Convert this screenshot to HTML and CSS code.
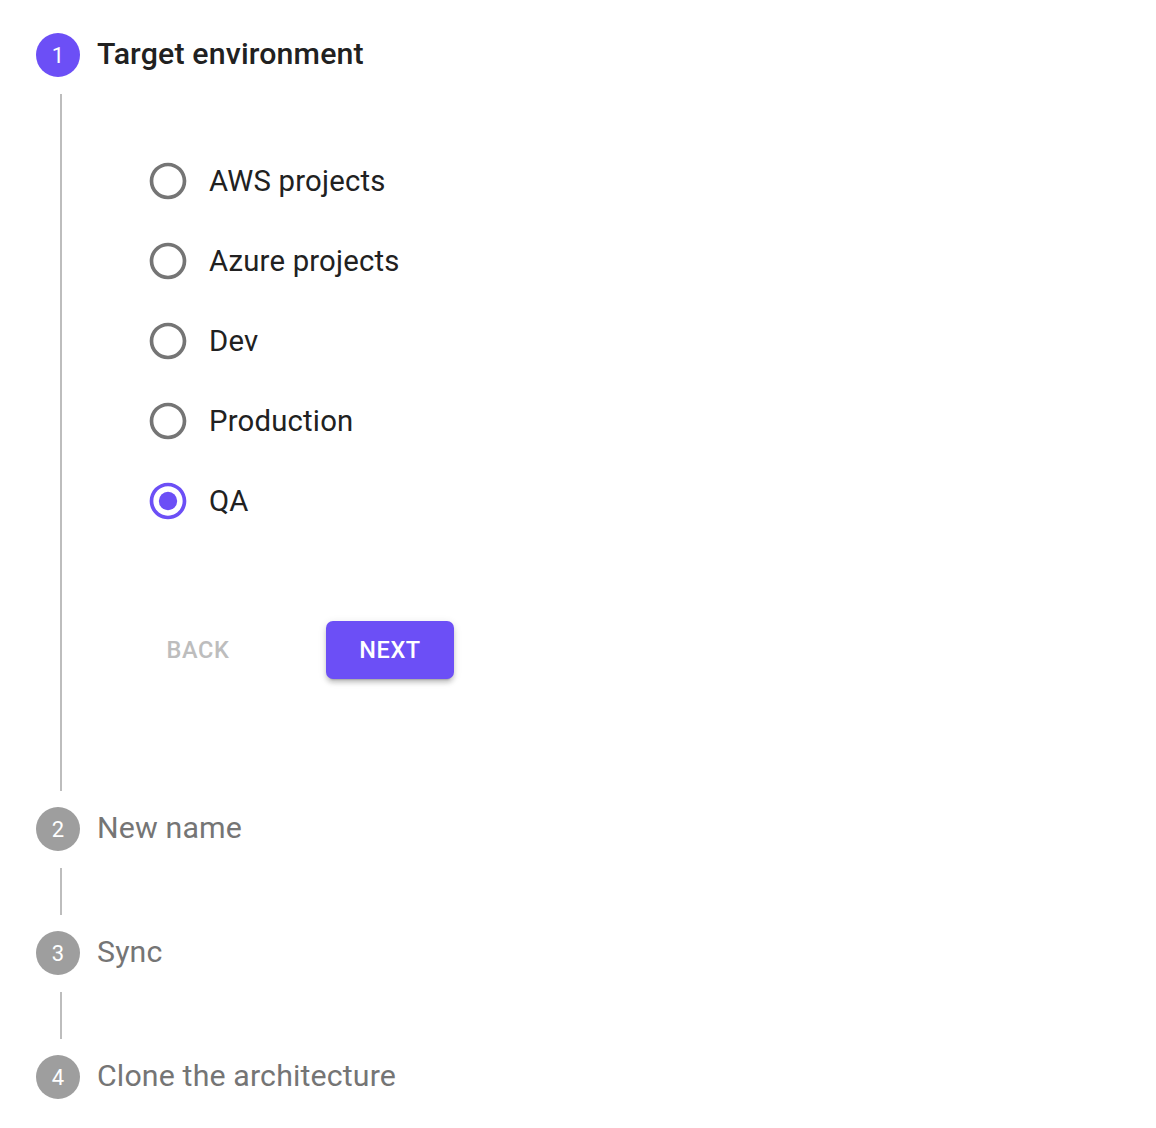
FILE: index.html
```html
<!DOCTYPE html>
<html>
<head>
<meta charset="utf-8">
<link rel="stylesheet" href="styles.css">
</head>
<body>
<div class="stepper">
  <div class="step-head">
    <div class="step-icon active">1</div>
    <div class="step-label active">Target environment</div>
  </div>
  <div class="step-content">
    <div class="radio-group">
      <label class="radio-row">
        <svg class="radio" viewBox="0 0 24 24"><path d="M12 2C6.48 2 2 6.48 2 12s4.48 10 10 10 10-4.48 10-10S17.52 2 12 2zm0 18c-4.42 0-8-3.58-8-8s3.58-8 8-8 8 3.58 8 8-3.58 8-8 8z"/></svg>
        <span class="radio-label">AWS projects</span>
      </label>
      <label class="radio-row">
        <svg class="radio" viewBox="0 0 24 24"><path d="M12 2C6.48 2 2 6.48 2 12s4.48 10 10 10 10-4.48 10-10S17.52 2 12 2zm0 18c-4.42 0-8-3.58-8-8s3.58-8 8-8 8 3.58 8 8-3.58 8-8 8z"/></svg>
        <span class="radio-label">Azure projects</span>
      </label>
      <label class="radio-row">
        <svg class="radio" viewBox="0 0 24 24"><path d="M12 2C6.48 2 2 6.48 2 12s4.48 10 10 10 10-4.48 10-10S17.52 2 12 2zm0 18c-4.42 0-8-3.58-8-8s3.58-8 8-8 8 3.58 8 8-3.58 8-8 8z"/></svg>
        <span class="radio-label">Dev</span>
      </label>
      <label class="radio-row">
        <svg class="radio" viewBox="0 0 24 24"><path d="M12 2C6.48 2 2 6.48 2 12s4.48 10 10 10 10-4.48 10-10S17.52 2 12 2zm0 18c-4.42 0-8-3.58-8-8s3.58-8 8-8 8 3.58 8 8-3.58 8-8 8z"/></svg>
        <span class="radio-label">Production</span>
      </label>
      <label class="radio-row">
        <svg class="radio checked" viewBox="0 0 24 24"><path d="M12 2C6.48 2 2 6.48 2 12s4.48 10 10 10 10-4.48 10-10S17.52 2 12 2zm0 18c-4.42 0-8-3.58-8-8s3.58-8 8-8 8 3.58 8 8-3.58 8-8 8z"/><circle cx="12" cy="12" r="5"/></svg>
        <span class="radio-label">QA</span>
      </label>
    </div>
    <div class="actions">
      <button class="btn btn-text" disabled>Back</button>
      <button class="btn btn-primary">Next</button>
    </div>
  </div>
  <div class="step-head">
    <div class="step-icon">2</div>
    <div class="step-label">New name</div>
  </div>
  <div class="connector"></div>
  <div class="step-head">
    <div class="step-icon">3</div>
    <div class="step-label">Sync</div>
  </div>
  <div class="connector"></div>
  <div class="step-head">
    <div class="step-icon">4</div>
    <div class="step-label">Clone the architecture</div>
  </div>
</div>
</body>
</html>
```

FILE: styles.css
```css
html, body {
  margin: 0;
  padding: 0;
  background: #ffffff;
}
body {
  font-family: Roboto, "Liberation Sans", Arial, sans-serif;
}
.stepper {
  display: flex;
  flex-direction: column;
  padding: 16.5px 0 0 36px;
}
.step-head {
  display: flex;
  align-items: center;
  gap: 17px;
  padding: 16.5px 0;
}
.step-icon {
  width: 44px;
  height: 44px;
  border-radius: 50%;
  background: #9e9e9e;
  color: #ffffff;
  font-size: 22px;
  display: flex;
  align-items: center;
  justify-content: center;
  flex: none;
}
.step-icon.active {
  background: #6c4ff6;
}
.step-label {
  font-size: 30.3px;
  color: #757575;
  letter-spacing: 0.15px;
  margin-bottom: 3px;
}
.step-label.active {
  color: #212121;
  font-weight: 500;
}
.step-content {
  margin-left: 24px;
  border-left: 2px solid #bdbdbd;
  padding: 47.5px 0 111.5px 84px;
}
.connector {
  margin-left: 24px;
  border-left: 2px solid #bdbdbd;
  height: 47px;
}
.radio-group {
  display: flex;
  flex-direction: column;
}
.radio-row {
  display: flex;
  align-items: center;
  height: 80px;
  gap: 19px;
}
.radio {
  width: 44px;
  height: 44px;
  fill: #757575;
  flex: none;
}
.radio.checked {
  fill: #6c4ff6;
}
.radio-label {
  font-size: 29.3px;
  color: #212121;
  letter-spacing: 0.2px;
}
.actions {
  display: flex;
  align-items: center;
  margin-top: 80px;
  gap: 76px;
}
.btn {
  font-family: Roboto, "Liberation Sans", Arial, sans-serif;
  font-size: 23.5px;
  font-weight: 500;
  letter-spacing: 0.6px;
  text-transform: uppercase;
  height: 58px;
  border: none;
  border-radius: 7px;
  padding: 0;
}
.btn-text {
  width: 104px;
  background: transparent;
  color: #bdbdbd;
}
.btn-primary {
  width: 128px;
  background: #6c4ff6;
  color: #ffffff;
  box-shadow: 0 5px 2px -4px rgba(0,0,0,0.2), 0 4px 4px 0 rgba(0,0,0,0.14), 0 2px 9px 0 rgba(0,0,0,0.12);
}
```
